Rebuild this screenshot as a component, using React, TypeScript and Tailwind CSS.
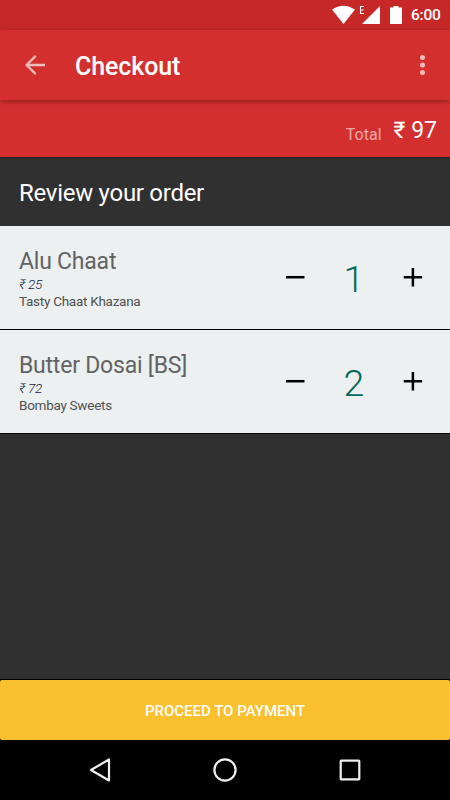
import React from "react";

type Item = { name: string; price: string; shop: string; qty: number };

const items: Item[] = [
  { name: "Alu Chaat", price: "₹ 25", shop: "Tasty Chaat Khazana", qty: 1 },
  { name: "Butter Dosai [BS]", price: "₹ 72", shop: "Bombay Sweets", qty: 2 },
];

function StatusBar() {
  return (
    <div className="flex h-[30px] items-center bg-[#c62828] pl-[332px] text-white">
      <svg className="h-[30px] w-[73px] shrink-0" viewBox="332 0 73 30" fill="#fff">
        <path d="M343.500 24 332 9.600Q343.500 2 355 9.600Z" />
        <path d="M380 6v18h-18Z" />
        <path d="M360.500 6.500h3.500M360.500 10h3M360.500 13.500h3.500M360.500 6v8" stroke="#fff" strokeWidth="1.100" />
        <path d="M390 7.500h3.500V6h5v1.500h3.500V24h-12Z" />
      </svg>
      <span className="ml-[6px] pt-[2px] text-[15.500px] font-medium tracking-[-0.200px]">6:00</span>
    </div>
  );
}

function AppBar() {
  return (
    <header className="relative flex h-[70px] items-center bg-[#d32f2f] pl-[25px] shadow-[0_2px_5px_rgba(0,0,0,0.3)]">
      <svg className="h-5 w-5" viewBox="0 0 20 20" fill="none" stroke="#f3bcbc" strokeWidth="2.300">
        <path d="M20 10H2M10.700 .9 1.600 10l9.100 9.100" />
      </svg>
      <h1 className="ml-[30px] pt-[3px] text-[25px] font-medium tracking-[-0.100px] text-white">Checkout</h1>
      <svg className="ml-auto mr-[25px] h-5 w-[5px]" viewBox="0 0 5 20" fill="#f3bcbc">
        <circle cx="2.500" cy="2.500" r="2.500" />
        <circle cx="2.500" cy="10" r="2.500" />
        <circle cx="2.500" cy="17.500" r="2.500" />
      </svg>
    </header>
  );
}

function Row({ item }: { item: Item }) {
  return (
    <li className="flex h-[104px] border-b border-black bg-[#ecf0f1] pl-[19px]">
      <div className="w-[266px] pt-[22px]">
        <div className="text-[23px] leading-7 tracking-[-0.220px] text-[#636363]">{item.name}</div>
        <div className="-mt-px text-[13.500px] leading-[18px] font-light italic tracking-[-0.300px] text-[#10233f]">{item.price}</div>
        <div className="-mt-px text-[13.500px] leading-[18px] tracking-[-0.270px] text-[#505050]">{item.shop}</div>
      </div>
      <button className="mt-[41px] h-5 w-5">
        <svg viewBox="0 0 20 20" stroke="#000" strokeWidth="2.500">
          <path d="M1 10.200h18.500" />
        </svg>
      </button>
      <span className="mt-[31px] w-[98px] text-center text-[37.500px] leading-[44px] font-light text-[#006b58]">{item.qty}</span>
      <button className="mt-[41px] h-5 w-5">
        <svg viewBox="0 0 20 20" stroke="#000" strokeWidth="2.500">
          <path d="M.7 10.200h18.500M9.900 1v18.500" />
        </svg>
      </button>
    </li>
  );
}

export default function App() {
  return (
    <div className="flex h-[800px] w-[450px] flex-col overflow-hidden bg-[#303030] font-['Roboto','Noto_Sans',sans-serif]">
      <StatusBar />
      <AppBar />
      <div className="flex h-[57px] items-start justify-end bg-[#d32f2f] pr-[13px]">
        <span className="mr-[12px] mt-[23px] text-[16px] leading-6 text-[#f0a9a9]">Total</span>
        <span className="mt-[16px] text-[23px] leading-[30px] text-white">₹ 97</span>
      </div>
      <h2 className="flex h-[69px] items-center border-t border-[#202020] pl-[19px] pt-[2px] text-[24px] tracking-[-0.280px] text-white">Review your order</h2>
      <ul>
        {items.map((item) => (
          <Row key={item.name} item={item} />
        ))}
      </ul>
      <div className="mt-auto border-t border-black bg-black">
        <button className="h-[60px] w-full rounded-[2px] bg-[#fbc02d] pt-[2px] text-[15px] font-medium text-white">PROCEED TO PAYMENT</button>
      </div>
      <nav className="h-[60px] shrink-0 bg-black">
        <svg className="h-[60px] w-[450px]" viewBox="0 0 450 60" fill="none" stroke="#eee" strokeWidth="2.200" strokeLinejoin="round">
          <path d="M109 19.500v21L91 30Z" />
          <circle cx="225" cy="30" r="10.600" />
          <rect x="340.700" y="20.700" width="18.600" height="18.600" rx=".5" />
        </svg>
      </nav>
    </div>
  );
}
